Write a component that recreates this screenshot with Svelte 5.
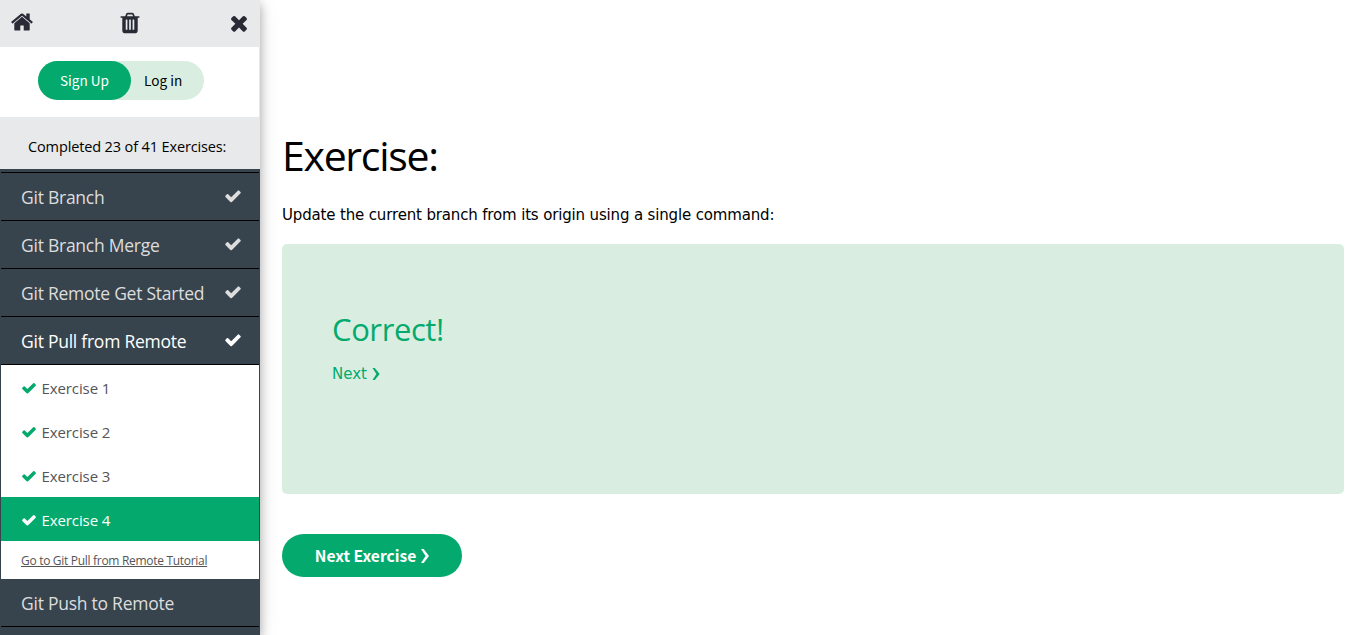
<script>
  const check = "M1671 566q0 40-28 68l-724 724-136 136q-28 28-68 28t-68-28l-136-136-362-362q-28-28-28-68t28-68l136-136q28-28 68-28t68 28l294 295 656-657q28-28 68-28t68 28l136 136q28 28 28 68z";
  const home = "M1472 992v480q0 26-19 45t-45 19h-384v-384h-256v384h-384q-26 0-45-19t-19-45v-480q0-1 .5-3t.5-3l575-474 575 474q1 2 1 6zm223-69l-62 74q-8 9-21 11h-3q-13 0-21-7l-692-577-692 577q-12 8-24 7-13-2-21-11l-62-74q-8-10-7-23.5t11-21.5l719-599q32-26 76-26t76 26l244 204v-195q0-14 9-23t23-9h192q14 0 23 9t9 23v408l219 182q10 8 11 21.5t-7 23.5z";
  const trash = "M704 1376v-704q0-14-9-23t-23-9h-64q-14 0-23 9t-9 23v704q0 14 9 23t23 9h64q14 0 23-9t9-23zm256 0v-704q0-14-9-23t-23-9h-64q-14 0-23 9t-9 23v704q0 14 9 23t23 9h64q14 0 23-9t9-23zm256 0v-704q0-14-9-23t-23-9h-64q-14 0-23 9t-9 23v704q0 14 9 23t23 9h64q14 0 23-9t9-23zm-544-992h448l-48-117q-7-9-17-11h-317q-10 2-17 11zm928 32v64q0 14-9 23t-23 9h-96v948q0 83-47 143.5t-113 60.5h-832q-66 0-113-58.5t-47-141.5v-952h-96q-14 0-23-9t-9-23v-64q0-14 9-23t23-9h309l70-167q15-37 54-63t79-26h320q40 0 79 26t54 63l70 167h309q14 0 23 9t9 23z";
  const times = "M1490 1322q0 40-28 68l-136 136q-28 28-68 28t-68-28l-294-294-294 294q-28 28-68 28t-68-28l-136-136q-28-28-28-68t28-68l294-294-294-294q-28-28-28-68t28-68l136-136q28-28 68-28t68 28l294 294 294-294q28-28 68-28t68 28l136 136q28 28 28 68t-28 68l-294 294 294 294q28 28 28 68z";
  const chapters = [
    { name: "Git Branch" },
    { name: "Git Branch Merge" },
    { name: "Git Remote Get Started" },
    { name: "Git Pull from Remote", active: true },
  ];
  const exercises = [1, 2, 3, 4];
  const current = 4;
</script>

{#snippet icon(d, size)}
  <svg width={size} height={size} viewBox="0 0 1792 1792" fill="currentColor" aria-hidden="true"><path {d} /></svg>
{/snippet}

<div class="page">
  <aside>
    <header class="tools">
      {@render icon(home, 24)}
      {@render icon(trash, 24)}
      {@render icon(times, 24)}
    </header>
    <div class="account">
      <div class="pill"><span class="signup">Sign Up</span><span class="login">Log in</span></div>
    </div>
    <div class="progress"><span>Completed 23 of 41 Exercises:</span></div>
    <nav>
      {#each chapters as c}
        <div class="chapter" class:active={c.active}><span>{c.name}</span>{@render icon(check, 18)}</div>
      {/each}
      <div class="list">
        {#each exercises as n}
          <div class="item" class:current={n === current}>{@render icon(check, 16)}<span>Exercise {n}</span></div>
        {/each}
        <div class="tutorial"><span>Go to Git Pull from Remote Tutorial</span></div>
      </div>
      <div class="chapter last"><span>Git Push to Remote</span></div>
    </nav>
  </aside>
  <main>
    <h1><span>Exercise:</span></h1>
    <p>Update the current branch from its origin using a single command:</p>
    <section>
      <h2>Correct!</h2>
      <div class="next">Next <svg width="8" height="12" viewBox="0 0 8 12" fill="currentColor"><path d="M.5 0h2.3L7.7 6 2.8 12H.5L4.4 6z" /></svg></div>
    </section>
    <button>Next Exercise <svg width="8" height="14" viewBox="0 0 8 14" fill="currentColor"><path d="M0 0h2.7L8 7 2.7 14H0l4.6-7z" /></svg></button>
  </main>
</div>

<style>
  :global(body) { margin: 0; background: #fff; overflow: hidden; }
  .page { display: flex; height: 635px; overflow: hidden; font-family: "Open Sans", sans-serif; color: #000; }
  svg { display: block; flex: none; }
  aside { width: 260px; flex: none; display: flex; flex-direction: column; box-shadow: 0 4px 10px rgba(0,0,0,.3), 0 4px 20px rgba(0,0,0,.1); background: #fff; }
  .tools { height: 47px; box-sizing: border-box; padding: 10px 9.5px 0 10px; display: flex; justify-content: space-between; background: #e7e9eb; color: #282a35; }
  .tools :global(svg + svg) { margin-top: 1px; }
  .account { height: 70px; box-sizing: border-box; padding: 14px 38px; border-right: 1px solid #e7e9eb; font: 13.6px/39px "Noto Sans CJK SC", sans-serif; }
  .pill { width: 166px; height: 39px; display: flex; border-radius: 20px; background: #d9eee1; }
  .signup { width: 93px; border-radius: 20px; background: #04aa6d; color: #fff; text-align: center; }
  .login { padding-left: 13px; }
  .progress { height: 52px; box-sizing: border-box; padding: 20px 0 0 28px; background: #e7e9eb; font-size: 14.5px; line-height: 20px; letter-spacing: -.13px; white-space: nowrap; }
  nav { flex: 1; background: #38444d; padding: 3px 1px 0; }
  .chapter { height: 48px; box-sizing: border-box; border-top: 1px solid #000; padding: 0 17px 0 20px; display: flex; justify-content: space-between; align-items: center; color: #ddd; font-size: 17.5px; letter-spacing: -.25px; line-height: 46px; white-space: nowrap; }
  .chapter svg { margin-bottom: 2px; }
  .chapter.active { color: #fff; }
  .list { background: #fff; border-top: 1px solid #000; }
  .item { height: 44px; box-sizing: border-box; padding: 2px 0 0 20px; display: flex; align-items: center; gap: 4.5px; color: #04aa6d; font-size: 15px; letter-spacing: -.1px; }
  .item span { color: #555; }
  .current { background: #04aa6d; color: #fff; }
  .current span { color: #fff; }
  .tutorial { height: 38px; box-sizing: border-box; padding: 10px 20px; color: #555; font-size: 12px; line-height: 20px; letter-spacing: -.3px; white-space: nowrap; text-decoration: underline; }
  .last { border-top: 0; border-bottom: 1px solid #000; }
  main { flex: 1; padding: 123px 22px 0; }
  h1 { margin: 0; height: 64px; font-size: 41px; line-height: 64px; font-weight: 400; letter-spacing: -1.3px; }
  p { margin: 18px 0 0; height: 20px; font: 15px/20px "DejaVu Sans", sans-serif; letter-spacing: -.155px; white-space: nowrap; }
  section { margin-top: 19px; height: 250px; box-sizing: border-box; padding: 61px 50px; border-radius: 5px; background: #d9eee1; color: #04aa6d; }
  h2 { margin: 0; height: 48px; font-size: 31px; line-height: 48px; font-weight: 400; letter-spacing: -.4px; }
  .next { margin-top: 11px; display: flex; align-items: center; gap: 5px; font: 15px/20px "DejaVu Sans", sans-serif; }
  button { margin-top: 40px; width: 180px; height: 43px; padding: 0; border: 0; border-radius: 22px; background: #04aa6d; color: #fff; display: flex; align-items: center; justify-content: center; gap: 5px; font: 700 15.6px/43px "Noto Sans CJK SC", sans-serif; }
</style>
